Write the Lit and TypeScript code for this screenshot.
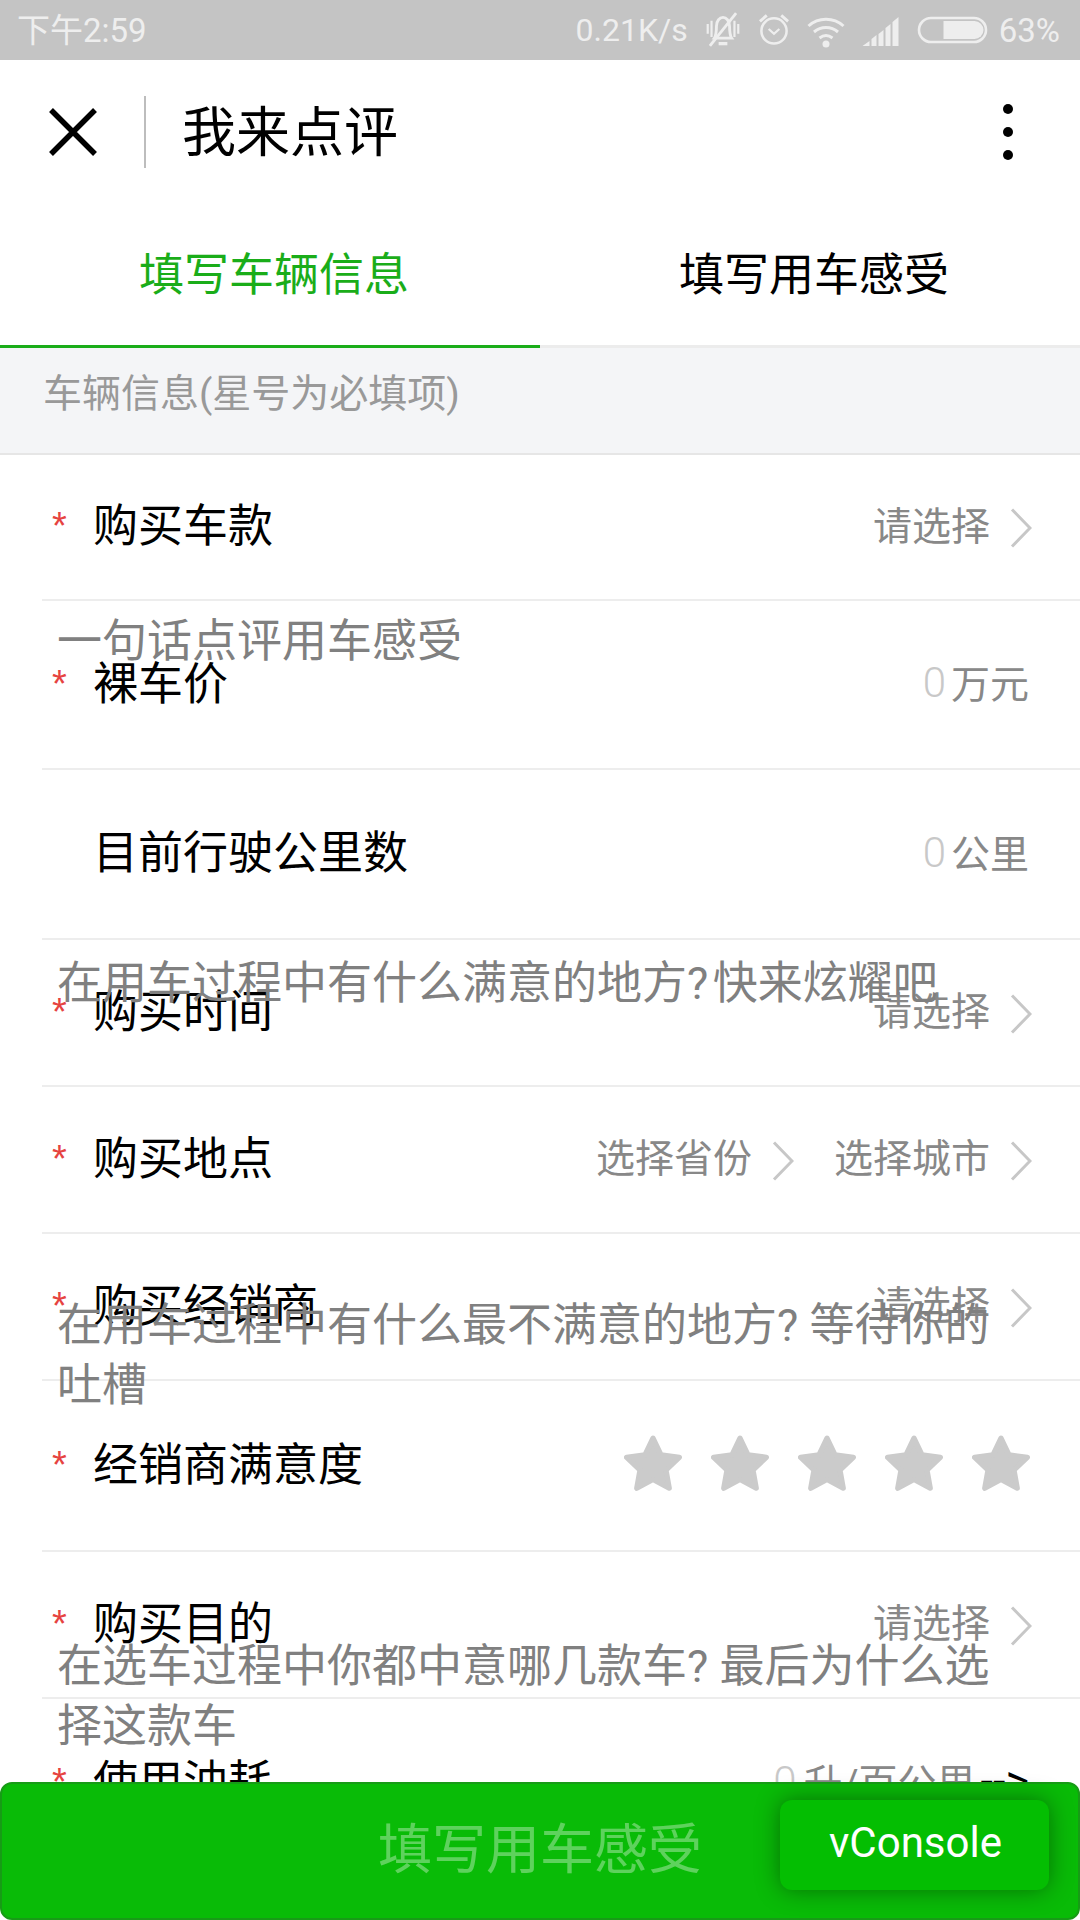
import { LitElement, css, html, nothing, svg } from 'lit';
import { customElement } from 'lit/decorators.js';

type RowKind = 'select' | 'unit' | 'region' | 'stars' | 'fuel';

interface FormRow {
  label: string;
  required: boolean;
  height: number;
  kind: RowKind;
  unit?: string;
}

const ROWS: FormRow[] = [
  { label: '购买车款', required: true, height: 146, kind: 'select' },
  { label: '裸车价', required: true, height: 169, kind: 'unit', unit: '万元' },
  { label: '目前行驶公里数', required: false, height: 170, kind: 'unit', unit: '公里' },
  { label: '购买时间', required: true, height: 147, kind: 'select' },
  { label: '购买地点', required: true, height: 147, kind: 'region' },
  { label: '购买经销商', required: true, height: 147, kind: 'select' },
  { label: '经销商满意度', required: true, height: 171, kind: 'stars' },
  { label: '购买目的', required: true, height: 147, kind: 'select' },
  { label: '使用油耗', required: true, height: 170, kind: 'fuel', unit: '升/百公里' },
];

// textarea placeholders that sit on top of the form rows
const NOTES: { top: number; text: string }[] = [
  { top: 612, text: '一句话点评用车感受' },
  { top: 954, text: '在用车过程中有什么满意的地方?\u200a快来炫耀吧' },
  { top: 1296, text: '在用车过程中有什么最不满意的地方? 等待你的吐槽' },
  { top: 1637, text: '在选车过程中你都中意哪几款车? 最后为什么选择这款车' },
];

const chevron = html`<svg class="chevron" viewBox="0 0 22 40" aria-hidden="true">
  <path d="M2 1.500L20 20 2 38.500" fill="none" stroke="#c7c7c7" stroke-width="3" />
</svg>`;

const star = svg`<path
  d="M29 5l7.6 15.8 17.4 2.4-12.7 12 3.1 17.2L29 44.1l-15.4 8.3 3.1-17.2L4 23.2l17.4-2.4z"
  fill="#cbcbcb" stroke="#cbcbcb" stroke-width="5" stroke-linejoin="round"
/>`;

@customElement('app-root')
export class AppRoot extends LitElement {
  static styles = css`
    :host {
      display: block;
      position: relative;
      width: 1080px;
      height: 1920px;
      overflow: hidden;
      background: #fff;
      color: #000;
      font-family: Roboto, 'Noto Sans CJK SC', sans-serif;
    }

    .status {
      display: flex;
      align-items: center;
      height: 60px;
      padding: 0 20px 0 17px;
      box-sizing: border-box;
      background: #c4c4c4;
      color: #eee;
      font-size: 33px;
      line-height: 1;
    }

    .status-right {
      display: flex;
      align-items: center;
      gap: 17px;
      margin-left: auto;
    }

    .status-right .speed {
      font-size: 32px;
    }

    .status-right .pct {
      margin-left: -6px;
    }

    .status svg {
      display: block;
      height: 36px;
    }

    .nav {
      display: flex;
      align-items: center;
      height: 144px;
    }

    .close {
      width: 50px;
      height: 50px;
      margin-left: 48px;
    }

    .nav-divider {
      width: 2px;
      height: 72px;
      margin-left: 46px;
      background: #bdbdbd;
    }

    .nav-title {
      margin-left: 36px;
      padding-top: 4px;
      font-size: 54px;
      line-height: 1.2;
    }

    .dots {
      display: flex;
      flex-direction: column;
      gap: 13px;
      margin-left: auto;
      margin-right: 67px;
    }

    .dots span {
      width: 10px;
      height: 10px;
      border-radius: 50%;
      background: #000;
    }

    .tabs {
      display: flex;
      height: 144px;
    }

    .tab {
      flex: 1;
      display: flex;
      align-items: center;
      justify-content: center;
      padding: 2px 0 0 8px;
      box-sizing: border-box;
      border-bottom: 3px solid #ececec;
      font-size: 45px;
      line-height: 1.2;
    }

    .tab.active {
      color: #1aad19;
      border-bottom-color: #1aad19;
    }

    .section {
      height: 107px;
      box-sizing: border-box;
      padding: 20px 0 0 43px;
      background: #f4f5f7;
      border-bottom: 2px solid #e6e6e6;
      color: #999;
      font-size: 39px;
      line-height: 52px;
    }

    .row {
      display: flex;
      align-items: center;
      box-sizing: border-box;
      margin-left: 42px;
      padding-right: 48px;
      border-bottom: 2px solid #ededed;
    }

    .mark {
      width: 51px;
      padding-left: 10px;
      box-sizing: border-box;
      flex: none;
      align-self: center;
      margin-top: -2px;
      color: #e64340;
      font-family: 'Liberation Sans', sans-serif;
      font-size: 38px;
      line-height: 1;
    }

    .label {
      font-size: 45px;
      line-height: 1.2;
    }

    .value {
      display: flex;
      align-items: center;
      margin-left: auto;
      color: #888;
      font-size: 39px;
      line-height: 1.2;
    }

    .value.unit {
      margin-right: 3px;
      padding-top: 2px;
    }

    .value .zero {
      margin: -4px 5px 0 0;
      color: #c8c8c8;
      font-size: 42px;
      font-weight: 300;
    }

    .value.fuel .zero {
      margin-right: 7px;
    }

    .chevron {
      width: 22px;
      height: 40px;
      margin: 3px 0 0 20px;
      flex: none;
    }

    .region-gap {
      width: 40px;
    }

    .arrow {
      margin: 0 0 6px 5px;
      color: #000;
      font-size: 45px;
    }

    .stars {
      display: flex;
      gap: 29px;
      margin-left: auto;
      margin-right: 2px;
      margin-top: -4px;
    }

    .stars svg {
      display: block;
      width: 58px;
      height: 58px;
    }

    .note {
      position: absolute;
      left: 57px;
      width: 940px;
      color: #808080;
      font-size: 45px;
      line-height: 60px;
    }

    .submit {
      position: absolute;
      left: 0;
      right: 0;
      bottom: 0;
      height: 138px;
      box-sizing: border-box;
      display: flex;
      align-items: center;
      justify-content: center;
      background: #09bb07;
      border: 2px solid #179b16;
      border-radius: 12px;
      color: rgba(255, 255, 255, 0.35);
      font-size: 54px;
      line-height: 1.2;
    }

    .vconsole {
      position: absolute;
      right: 31px;
      bottom: 30px;
      width: 269px;
      height: 90px;
      padding: 0 0 5px 2px;
      box-sizing: border-box;
      display: flex;
      align-items: center;
      justify-content: center;
      background: #04be02;
      border-radius: 12px;
      box-shadow: 0 0 24px rgba(0, 0, 0, 0.4);
      color: #fff;
      font-size: 42px;
    }
  `;

  render() {
    return html`
      ${this.renderStatus()}
      <div class="nav">
        <svg class="close" viewBox="0 0 50 50" aria-hidden="true">
          <path d="M3 3l44 44M47 3L3 47" fill="none" stroke="#000" stroke-width="5.500" />
        </svg>
        <div class="nav-divider"></div>
        <div class="nav-title">我来点评</div>
        <div class="dots"><span></span><span></span><span></span></div>
      </div>
      <div class="tabs">
        <div class="tab active">填写车辆信息</div>
        <div class="tab">填写用车感受</div>
      </div>
      <div class="section">车辆信息(星号为必填项)</div>
      ${ROWS.map((row) => this.renderRow(row))}
      ${NOTES.map((note) => html`<div class="note" style="top:${note.top}px">${note.text}</div>`)}
      <div class="submit">填写用车感受</div>
      <div class="vconsole">vConsole</div>
    `;
  }

  private renderStatus() {
    return html`
      <div class="status">
        <span>下午2:59</span>
        <div class="status-right">
          <span class="speed">0.21K/s</span>
          <svg viewBox="1 2 32 33" style="width:36px" aria-hidden="true">
            <g fill="none" stroke="#eee" stroke-width="2.6">
              <path d="M9 26c2-3 2-6 2-11 0-5 3-8 6-8s6 3 6 8c0 5 0 8 2 11z" />
              <path d="M3 13v9M31 13v9M6.5 10v15M27.5 10v15" stroke-width="2" />
              <path d="M5 33L29 3" />
              <path d="M13 31h8" stroke-width="3" />
            </g>
          </svg>
          <svg viewBox="0 2 33 34" style="width:32px" aria-hidden="true">
            <g fill="none" stroke="#eee" stroke-width="2.6">
              <circle cx="16.5" cy="20" r="13" />
              <path d="M11 18l5.500 5 5.500-5" stroke-width="2.200" />
              <path d="M2 10l7-6M31 10l-7-6" stroke-width="3" />
            </g>
          </svg>
          <svg viewBox="0 0 38 36" style="width:38px" aria-hidden="true">
            <g fill="none" stroke="#eee" stroke-width="3">
              <path d="M1.500 14c10-9 25-9 35 0" />
              <path d="M7 20c7-6 17-6 24 0" />
              <path d="M12.500 26c4-3 9-3 13 0" />
            </g>
            <circle cx="19" cy="32" r="3.500" fill="#eee" />
          </svg>
          <svg viewBox="0 0 37 36" style="width:38px" aria-hidden="true">
            <path
              d="M0 34l7-5v5zM9 27l5-4v11H9zM16 22l5-4v16h-5zM23 16l5-4v22h-5zM30 10l6-5v29h-6z"
              fill="#eee"
            />
          </svg>
          <svg viewBox="0 0 70 36" style="width:71px" aria-hidden="true">
            <rect x="1.500" y="6" width="67" height="24" rx="12" fill="none" stroke="#eee" stroke-width="2.600" />
            <path d="M26 9h31a9 9 0 0 1 0 18H26z" fill="#eee" />
          </svg>
          <span class="pct">63%</span>
        </div>
      </div>
    `;
  }

  private renderRow(row: FormRow) {
    return html`
      <div class="row" style="height:${row.height}px">
        <span class="mark">${row.required ? '*' : nothing}</span>
        <span class="label">${row.label}</span>
        ${this.renderValue(row)}
      </div>
    `;
  }

  private renderValue(row: FormRow) {
    switch (row.kind) {
      case 'select':
        return html`<div class="value">请选择${chevron}</div>`;
      case 'unit':
        return html`<div class="value unit"><span class="zero">0</span>${row.unit}</div>`;
      case 'region':
        return html`<div class="value">
          选择省份${chevron}<span class="region-gap"></span>选择城市${chevron}
        </div>`;
      case 'stars':
        return html`<div class="stars">
          ${[0, 1, 2, 3, 4].map(() => html`<svg viewBox="1.5 2 55 55" aria-hidden="true">${star}</svg>`)}
        </div>`;
      case 'fuel':
        return html`<div class="value unit fuel">
          <span class="zero">0</span>${row.unit}<span class="arrow">--&gt;</span>
        </div>`;
    }
  }
}

declare global {
  interface HTMLElementTagNameMap {
    'app-root': AppRoot;
  }
}
